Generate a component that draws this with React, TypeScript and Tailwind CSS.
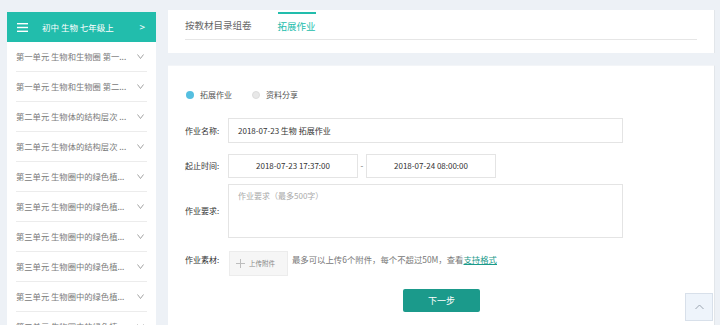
import React from "react";

const items = [
  "第一单元 生物和生物圈 第一...",
  "第一单元 生物和生物圈 第二...",
  "第二单元 生物体的结构层次 ...",
  "第二单元 生物体的结构层次 ...",
  "第三单元 生物圈中的绿色植...",
  "第三单元 生物圈中的绿色植...",
  "第三单元 生物圈中的绿色植...",
  "第三单元 生物圈中的绿色植...",
  "第三单元 生物圈中的绿色植...",
  "第三单元 生物圈中的绿色植...",
];

function ChevronDown() {
  return (
    <svg width="7" height="5" viewBox="0 0 7 5" className="shrink-0">
      <polyline points="0.5,0.5 3.5,4.5 6.5,0.5" fill="none" stroke="#9a9a9a" strokeWidth="0.9" />
    </svg>
  );
}

export default function App() {
  const font = { fontFamily: '"Noto Sans CJK SC", "Noto Sans", sans-serif' };
  return (
    <div className="relative w-[720px] h-[325px] overflow-hidden bg-[#edf1f6] flex" style={font}>
      {/* Sidebar */}
      <div className="ml-[7px] mt-[12px] w-[149px] flex flex-col shrink-0">
        <div className="h-[30px] shrink-0 bg-[#22bdac] flex items-center pl-[10px] pr-[11px] text-white">
          <svg width="11" height="9" viewBox="0 0 11 9" className="shrink-0">
            <rect x="0" y="0" width="11" height="1.4" fill="#fff" />
            <rect x="0" y="3.8" width="11" height="1.4" fill="#fff" />
            <rect x="0" y="7.6" width="11" height="1.4" fill="#fff" />
          </svg>
          <span className="ml-[14px] text-[8.5px] leading-none">初中 生物 七年级上</span>
          <span className="ml-auto text-[10px] leading-none">&gt;</span>
        </div>
        <div className="bg-white flex-1 px-[9px]">
          {items.map((t, i) => (
            <div
              key={i}
              className="h-[30px] shrink-0 flex items-center justify-between border-b border-[#ececec] pr-[3px]"
            >
              <span className="text-[8.3px] text-[#7a7a7a] leading-none whitespace-nowrap">{t}</span>
              <ChevronDown />
            </div>
          ))}
        </div>
      </div>

      {/* Main */}
      <div className="ml-[12px] w-[547px] flex flex-col shrink-0">
        <div className="mt-[10px] h-[43px] shrink-0 bg-white border-r border-[#e2e6ea] px-[17px]">
          <div className="h-[30px] flex items-stretch border-b border-[#e6e6e6]">
            <div className="flex items-center text-[9.5px] text-[#666] leading-none pt-[2px]">按教材目录组卷</div>
            <div className="ml-[26px] flex flex-col">
              <div className="h-[2px] mt-[2px] bg-[#22bdac]" />
              <div className="flex-1 flex items-center text-[9.5px] text-[#22bdac] leading-none">拓展作业</div>
            </div>
          </div>
        </div>

        <div className="mt-[12px] flex-1 bg-white border-r border-[#e2e6ea] border-t border-t-[#f3f5f8] pl-[17px] pt-[24px]">
          {/* radios */}
          <div className="flex items-center h-[10px] pl-[1px]">
            <span className="w-[8px] h-[8px] rounded-full bg-[#55bfe0]" />
            <span className="ml-[6px] text-[8px] text-[#555] leading-none">拓展作业</span>
            <span className="ml-[20px] w-[8px] h-[8px] rounded-full bg-[#e8e8e8] border border-[#dcdcdc]" />
            <span className="ml-[6px] text-[8px] text-[#555] leading-none">资料分享</span>
          </div>

          {/* name */}
          <div className="mt-[18px] flex items-center">
            <div className="w-[43px] text-[8px] text-[#333] leading-none">作业名称:</div>
            <div className="w-[395px] h-[25px] border border-[#e4e4e4] flex items-center pl-[9px] text-[8px] text-[#333] leading-none">
              2018-07-23 生物 拓展作业
            </div>
          </div>

          {/* time */}
          <div className="mt-[11px] flex items-center">
            <div className="w-[43px] text-[8px] text-[#333] leading-none">起止时间:</div>
            <div className="w-[130px] h-[24px] border border-[#e4e4e4] flex items-center justify-center text-[8px] text-[#333] leading-none">
              2018-07-23 17:37:00
            </div>
            <div className="w-[8px] text-center text-[8px] text-[#666] leading-none">-</div>
            <div className="w-[130px] h-[24px] border border-[#e4e4e4] flex items-center justify-center text-[8px] text-[#333] leading-none">
              2018-07-24 08:00:00
            </div>
          </div>

          {/* requirement */}
          <div className="mt-[6px] flex items-center">
            <div className="w-[43px] text-[8px] text-[#333] leading-none">作业要求:</div>
            <div className="w-[395px] h-[54px] border border-[#e4e4e4] pl-[9px] pt-[7px] text-[8px] text-[#aaa] leading-none">
              作业要求（最多500字）
            </div>
          </div>

          {/* material */}
          <div className="mt-[13px] flex items-start">
            <div className="w-[44px] pt-[5px] text-[8px] text-[#333] leading-none">作业素材:</div>
            <div className="w-[59px] h-[25px] bg-[#f6f6f6] border border-[#ececec] flex items-center pl-[6px]">
              <svg width="9" height="9" viewBox="0 0 9 9">
                <rect x="4" y="0" width="1" height="9" fill="#bdbdbd" />
                <rect x="0" y="4" width="9" height="1" fill="#bdbdbd" />
              </svg>
              <span className="ml-[4px] text-[6.5px] text-[#888] leading-none">上传附件</span>
            </div>
            <div className="ml-[4px] pt-[4px] text-[8.4px] text-[#777] leading-none whitespace-nowrap">
              最多可以上传6个附件，每个不超过50M，查看
              <span className="text-[#1a9a8a] underline">支持格式</span>
            </div>
          </div>

          {/* button */}
          <div className="mt-[13px] flex">
            <div className="ml-[218px] w-[77px] h-[23px] rounded-[2px] bg-[#1b9a8b] flex items-center justify-center text-[9px] text-white leading-none">
              下一步
            </div>
          </div>
        </div>
      </div>

      {/* back to top */}
      <div className="absolute left-[685px] top-[293px] w-[28px] h-[28px] bg-[#eef4fb] border border-[#d8e0ea] flex items-center justify-center">
        <svg width="9" height="6" viewBox="0 0 9 6">
          <polyline points="0.5,5 4.5,1 8.5,5" fill="none" stroke="#9aa4b0" strokeWidth="1" />
        </svg>
      </div>
    </div>
  );
}
